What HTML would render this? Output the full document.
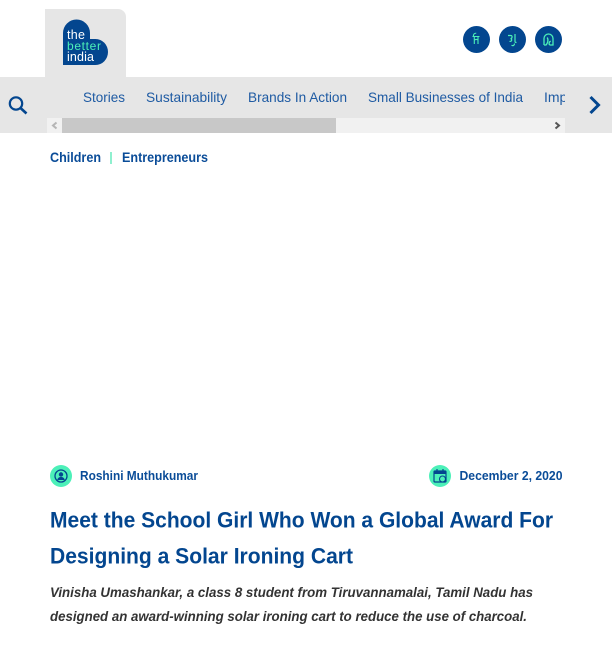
<!DOCTYPE html>
<html lang="en"><head><meta charset="utf-8"><title>The Better India</title>
<style>html,body{margin:0;padding:0;background:#fff;width:612px;height:658px;overflow:hidden}svg{display:block}text{font-family:"Liberation Sans",Arial,sans-serif}</style></head>
<body>
<svg width="612" height="658" viewBox="0 0 612 658" xmlns="http://www.w3.org/2000/svg">
<rect width="612" height="658" fill="#fff"/>
<!-- nav band -->
<rect x="0" y="77" width="612" height="56" fill="#e6e6e6"/>
<!-- logo tab -->
<path d="M45 77V9H118a8 8 0 0 1 8 8V77Z" fill="#e6e6e6"/>
<path d="M63 65V33a13.500 13.500 0 0 1 27 0V39H95.500a12.500 13 0 0 1 0 26Z" fill="#03468f"/>
<text x="67" y="39" font-size="12.500" fill="#fff" textLength="18" lengthAdjust="spacing">the</text>
<text x="67" y="50" font-size="12" fill="#4cf0b8" textLength="34" lengthAdjust="spacing">better</text>
<text x="67" y="61" font-size="12.500" fill="#fff" textLength="27" lengthAdjust="spacing">india</text>
<!-- language circles -->
<circle cx="476.500" cy="39.500" r="13.500" fill="#03468f"/>
<circle cx="512.500" cy="39.500" r="13.500" fill="#03468f"/>
<circle cx="548.500" cy="39.500" r="13.500" fill="#03468f"/>
<path d="M472.500 36.500h7M474.300 36.500v7.500M478 36.500v7.500M474.300 40c1.500-.7 3-.7 3.700 0M473.500 36.500c-.5-2 1-3.500 2.700-3.200" fill="none" stroke="#4cf0b8" stroke-width="1.100"/>
<path d="M508 35.500h3c1.500 0 1.500 3-.5 3.200M510.500 38.700c2 .3 1.500 3-1 2.700M515 34v7.500c0 .5.500 1 1.500 1M514.500 43.500c0 2-1.500 2.500-3 1.800" fill="none" stroke="#4cf0b8" stroke-width="1.200"/>
<path d="M544 45v-6.500a4.500 4.500 0 0 1 9 0v6.500h-3.200M544 45h2c1.500-1.500 2.800-5 1.200-7.500M549.800 45c-1.200-1-.8-3.500 1-3.700" fill="none" stroke="#4cf0b8" stroke-width="1.300"/>
<!-- search -->
<circle cx="16" cy="103.500" r="6.200" fill="none" stroke="#03468f" stroke-width="2.200"/>
<path d="M20.500 108L26.500 113.500" stroke="#03468f" stroke-width="2.600" fill="none"/>
<!-- nav text -->
<svg x="47" y="77" width="518" height="41" viewBox="47 77 518 41">
<g font-size="14" fill="#1f5ba3">
<text x="83" y="102" textLength="42" lengthAdjust="spacingAndGlyphs">Stories</text>
<text x="146" y="102" textLength="81" lengthAdjust="spacingAndGlyphs">Sustainability</text>
<text x="248" y="102" textLength="99" lengthAdjust="spacingAndGlyphs">Brands In Action</text>
<text x="368" y="102" textLength="155" lengthAdjust="spacingAndGlyphs">Small Businesses of India</text>
<text x="544" y="102">Impact</text>
</g>
</svg>
<!-- chevron -->
<path d="M590.500 97L598.500 105L590.500 113" fill="none" stroke="#03468f" stroke-width="3"/>
<!-- scrollbar -->
<rect x="47" y="118" width="518" height="15" fill="#f1f1f1"/>
<rect x="62" y="118" width="274" height="15" fill="#c8c8c8"/>
<path d="M56.500 122.500l-3.500 3 3.500 3" fill="none" stroke="#b5b5b5" stroke-width="2"/>
<path d="M555.500 122.500l3.500 3-3.500 3" fill="none" stroke="#555" stroke-width="2"/>
<!-- tags -->
<g font-size="14" font-weight="700" fill="#0a4c98">
<text x="50" y="162" textLength="51" lengthAdjust="spacingAndGlyphs">Children</text>
<text x="122" y="162" textLength="86" lengthAdjust="spacingAndGlyphs">Entrepreneurs</text>
</g>
<rect x="110" y="152" width="2" height="12" fill="#8ff0cf"/>
<!-- author -->
<circle cx="61" cy="476" r="11" fill="#4cf0b8"/>
<circle cx="61" cy="476" r="6" fill="none" stroke="#03468f" stroke-width="1.300"/>
<circle cx="61" cy="474.500" r="2.200" fill="#03468f"/>
<path d="M57.300 480c.5-2.500 2-3 3.700-3s3.200.5 3.700 3z" fill="#03468f"/>
<text x="80" y="480" font-size="12.500" font-weight="700" fill="#0a4c98" textLength="118" lengthAdjust="spacingAndGlyphs">Roshini Muthukumar</text>
<!-- date -->
<circle cx="440" cy="476" r="11" fill="#4cf0b8"/>
<rect x="434" y="471" width="12" height="11" rx="1" fill="none" stroke="#03468f" stroke-width="1.200"/>
<rect x="434" y="471" width="12" height="3" fill="#03468f"/>
<path d="M437 469v3M443 469v3" stroke="#03468f" stroke-width="1.200"/>
<circle cx="442.500" cy="479" r="3" fill="#4cf0b8" stroke="#03468f" stroke-width="1.100"/>
<text x="459.500" y="480" font-size="12.500" font-weight="700" fill="#0a4c98" textLength="103" lengthAdjust="spacingAndGlyphs">December 2, 2020</text>
<!-- title -->
<g font-size="22" font-weight="700" fill="#03468f">
<text x="50" y="527.500" textLength="503" lengthAdjust="spacingAndGlyphs">Meet the School Girl Who Won a Global Award For</text>
<text x="50" y="563.500" textLength="303" lengthAdjust="spacingAndGlyphs">Designing a Solar Ironing Cart</text>
</g>
<!-- excerpt -->
<g font-size="14" font-weight="700" font-style="italic" fill="#333">
<text x="50" y="597" textLength="483" lengthAdjust="spacingAndGlyphs">Vinisha Umashankar, a class 8 student from Tiruvannamalai, Tamil Nadu has</text>
<text x="50" y="621" textLength="477" lengthAdjust="spacingAndGlyphs">designed an award-winning solar ironing cart to reduce the use of charcoal.</text>
</g>
</svg>
</body></html>
